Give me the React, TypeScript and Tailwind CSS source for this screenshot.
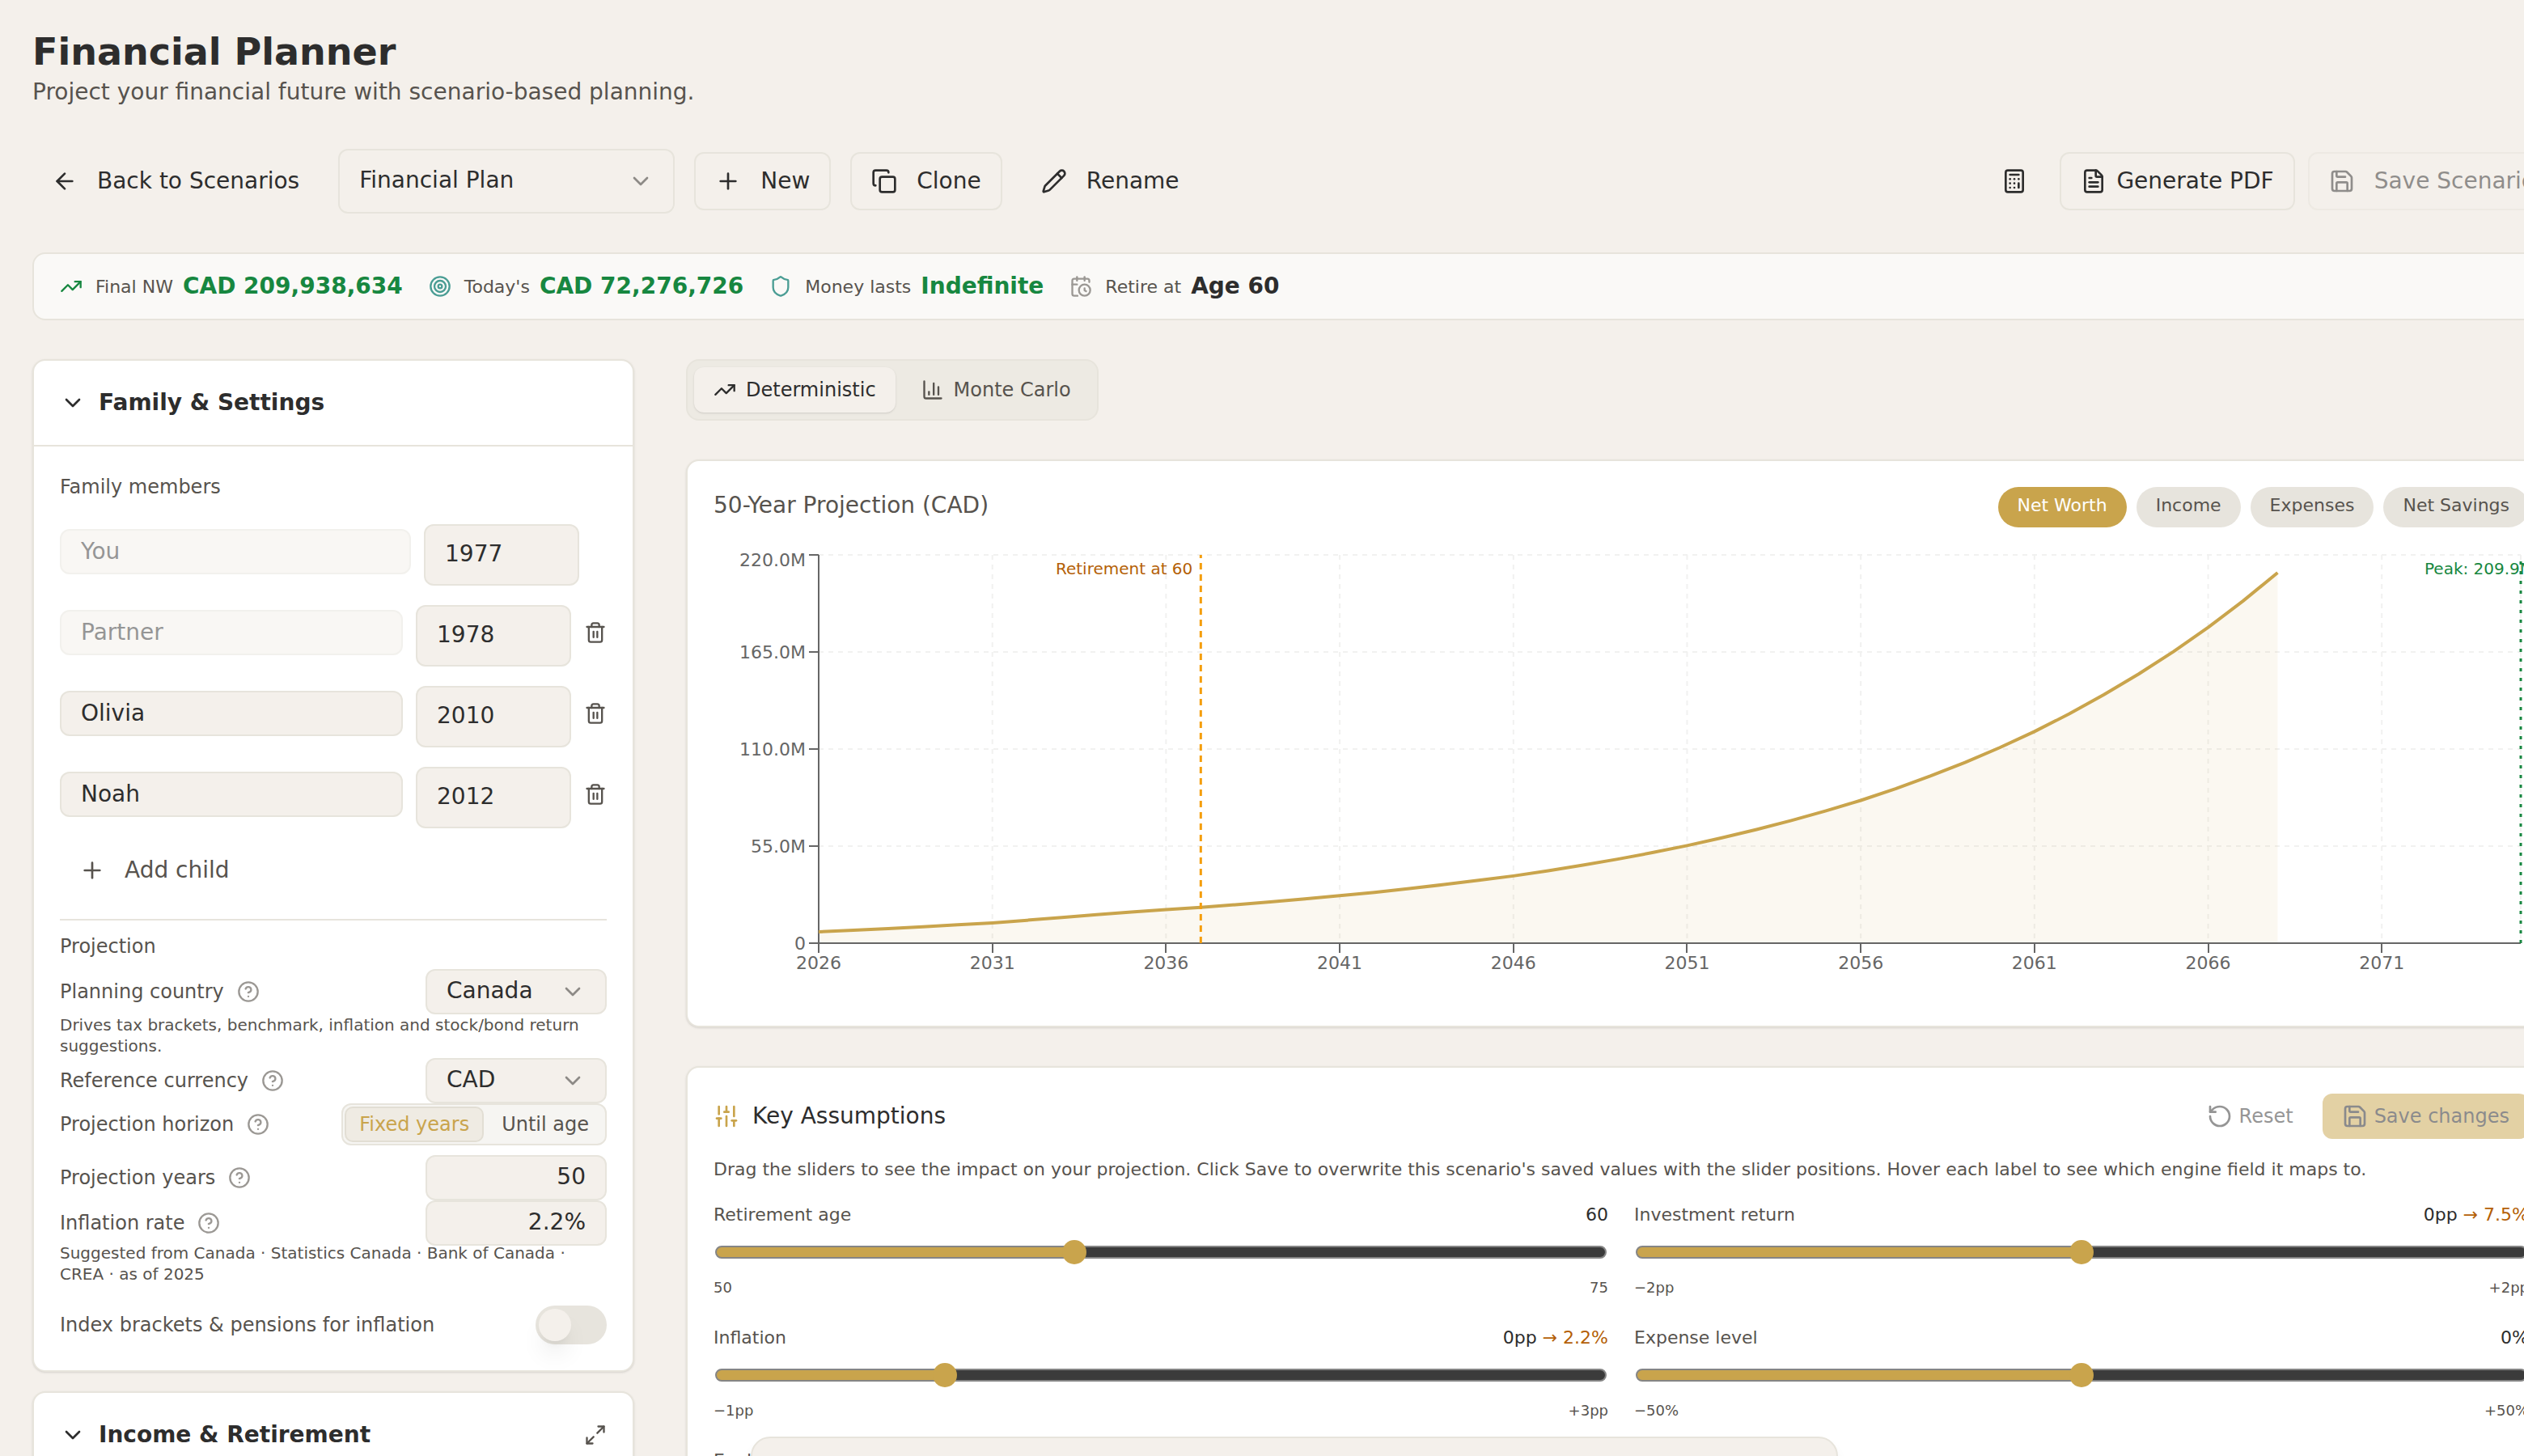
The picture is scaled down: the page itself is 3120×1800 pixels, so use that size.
import React, { useState } from 'react';
import {
  ArrowLeft,
  Calculator,
  CalendarClock,
  ChartColumn,
  ChevronDown,
  CircleHelp,
  Copy,
  FileText,
  Maximize2,
  Pencil,
  Plus,
  RotateCcw,
  Save,
  Shield,
  SlidersVertical,
  Target,
  Trash2,
  TrendingUp,
} from 'lucide-react';

interface Member {
  id: string;
  name: string;
  year: string;
  locked: boolean;
  removable: boolean;
}

const MEMBERS: Member[] = [
  { id: 'you', name: 'You', year: '1977', locked: true, removable: false },
  { id: 'partner', name: 'Partner', year: '1978', locked: true, removable: true },
  { id: 'olivia', name: 'Olivia', year: '2010', locked: false, removable: true },
  { id: 'noah', name: 'Noah', year: '2012', locked: false, removable: true },
];

const START_YEAR = 2026;

// Net worth in millions, one value per year
const NET_WORTH = [
  6.4, 7.3, 8.3, 9.3, 10.4, 11.5, 13.0, 14.6, 16.2, 17.7, 19.0, 20.3, 21.8, 23.4, 25.1, 26.9, 28.8, 30.9, 33.2, 35.6,
  38.1, 41.0, 44.2, 47.6, 51.3, 55.3, 59.7, 64.4, 69.5, 75.0, 80.9, 87.5, 94.7, 102.4, 110.8, 119.9, 129.9, 140.8,
  152.5, 165.2, 178.9, 193.8, 209.9,
];

const SERIES = ['Net Worth', 'Income', 'Expenses', 'Net Savings'];

const PLOT = { left: 130, right: 2234, top: 10, bottom: 490 };
const xOf = (year: number) => PLOT.left + ((year - START_YEAR) * (PLOT.right - PLOT.left)) / 49;
const yOf = (value: number) => PLOT.bottom - (value * (PLOT.bottom - PLOT.top)) / 220;

const ProjectionChart: React.FC = () => {
  const line = NET_WORTH.map((v, i) => `${i === 0 ? 'M' : 'L'}${xOf(START_YEAR + i)} ${yOf(v)}`).join(' ');
  const area = `${line} V${PLOT.bottom} H${PLOT.left} Z`;
  const yTicks = [0, 55, 110, 165, 220];
  const xTicks = [2026, 2031, 2036, 2041, 2046, 2051, 2056, 2061, 2066, 2071];

  return (
    <svg viewBox="0 0 2244 560" className="block w-full overflow-visible" role="img" aria-label="Net worth projection">
      <g stroke="#f1f1f0" strokeWidth="2" strokeDasharray="6 6">
        {yTicks.map((t) => (
          <path key={t} d={`M${PLOT.left} ${yOf(t)} H${PLOT.right}`} />
        ))}
        {[...xTicks, 2075].map((t) => (
          <path key={t} d={`M${xOf(t)} ${PLOT.top} V${PLOT.bottom}`} />
        ))}
      </g>
      <path d={area} fill="#c9a44c" fillOpacity="0.08" />
      <g stroke="#666" strokeWidth="2" shapeRendering="crispEdges">
        <path d={`M${PLOT.left} ${PLOT.top} V${PLOT.bottom}`} />
        <path d={`M${PLOT.left} ${PLOT.bottom} H${PLOT.right}`} />
        {yTicks.map((t) => (
          <path key={t} d={`M${PLOT.left - 12} ${yOf(t)} H${PLOT.left}`} />
        ))}
        {xTicks.map((t) => (
          <path key={t} d={`M${xOf(t)} ${PLOT.bottom} v12`} />
        ))}
      </g>
      <path d={line} fill="none" stroke="#c9a44c" strokeWidth="4" strokeLinejoin="round" />
      <g fill="#666" fontSize="22">
        {yTicks.map((t) => (
          <text key={t} x={PLOT.left - 16} y={t === 220 ? 24 : yOf(t) + 8} textAnchor="end">
            {t === 0 ? '0' : `${t.toFixed(1)}M`}
          </text>
        ))}
        {xTicks.map((t) => (
          <text key={t} x={xOf(t)} y={PLOT.bottom + 32} textAnchor="middle">
            {t}
          </text>
        ))}
      </g>
      <path
        d={`M${xOf(2037)} ${PLOT.bottom} V${PLOT.top}`}
        stroke="#f59e0b"
        strokeWidth="3"
        strokeDasharray="8 6"
      />
      <text x={xOf(2037) - 10} y="34" textAnchor="end" fontSize="20" fill="#b45f06">
        Retirement at 60
      </text>
      <path
        d={`M${xOf(2075)} ${PLOT.bottom} V${PLOT.top}`}
        stroke="#178740"
        strokeWidth="3"
        strokeDasharray="4 8"
      />
      <text x="2115" y="34" fontSize="20" fill="#178740">
        Peak: 209.9M
      </text>
    </svg>
  );
};

interface StatProps {
  icon: React.ReactNode;
  label: string;
  value: string;
  valueClass: string;
}

const Stat: React.FC<StatProps> = ({ icon, label, value, valueClass }) => (
  <div className="flex items-center">
    {icon}
    <span className="ml-4 text-[22px] text-[#57534e]">{label}</span>
    <span className={`ml-3 text-[28px] font-bold ${valueClass}`}>{value}</span>
  </div>
);

const FieldLabel: React.FC<{ htmlFor?: string; children: React.ReactNode }> = ({ htmlFor, children }) => (
  <div className="flex items-center gap-4">
    <label htmlFor={htmlFor} className="text-2xl text-[#57534e]">
      {children}
    </label>
    <CircleHelp size={28} className="text-[#9b9894]" />
  </div>
);

interface DropdownProps {
  id: string;
  options: string[];
  className: string;
  label?: string;
}

const Dropdown: React.FC<DropdownProps> = ({ id, options, className, label }) => (
  <div className={`relative ${className}`}>
    <select
      id={id}
      aria-label={label}
      className="h-full w-full appearance-none rounded-xl border-2 border-[#e7e4dc] bg-[#f4f0eb] px-6 pb-[2px] text-[28px] leading-8 text-[#2d2d2d]"
    >
      {options.map((o) => (
        <option key={o}>{o}</option>
      ))}
    </select>
    <ChevronDown size={32} className="pointer-events-none absolute inset-y-0 right-[26px] my-auto text-[#8d8a86]" />
  </div>
);

interface SliderProps {
  id: string;
  label: string;
  min: number;
  max: number;
  initial: number;
  minLabel: string;
  maxLabel: string;
  value: string;
  result?: string;
}

const AssumptionSlider: React.FC<SliderProps> = ({ id, label, min, max, initial, minLabel, maxLabel, value, result }) => {
  const [current, setCurrent] = useState(initial);
  const fill = ((current - min) / (max - min)) * 100;

  return (
    <div>
      <div className="flex justify-between text-[22px] leading-7">
        <label htmlFor={id} className="text-[#57534e]">
          {label}
        </label>
        <span className="text-[#2d2d2d]">
          {value}
          {result && <span className="text-[#b45f06]"> → {result}</span>}
        </span>
      </div>
      <input
        id={id}
        type="range"
        min={min}
        max={max}
        value={current}
        onChange={(e) => setCurrent(Number(e.target.value))}
        style={{ '--fill': `${fill}%` } as React.CSSProperties}
        className="mt-4 block h-8 w-full appearance-none bg-transparent px-[2px] [&::-webkit-slider-runnable-track]:h-4 [&::-webkit-slider-runnable-track]:rounded-full [&::-webkit-slider-runnable-track]:border-2 [&::-webkit-slider-runnable-track]:border-[#858585] [&::-webkit-slider-runnable-track]:bg-[linear-gradient(to_right,#c9a44c_var(--fill),#3b3b3b_var(--fill))] [&::-webkit-slider-thumb]:-mt-[9px] [&::-webkit-slider-thumb]:size-[30px] [&::-webkit-slider-thumb]:appearance-none [&::-webkit-slider-thumb]:rounded-full [&::-webkit-slider-thumb]:bg-[#c9a44c]"
      />
      <div className="mt-4 flex justify-between pb-1 text-[18px] leading-6 text-[#57534e]">
        <span>{minLabel}</span>
        <span>{maxLabel}</span>
      </div>
    </div>
  );
};

const FamilyCard: React.FC = () => {
  const [horizon, setHorizon] = useState<'fixed' | 'age'>('fixed');
  const [indexed, setIndexed] = useState(false);

  return (
    <section className="rounded-2xl border-2 border-[#e7e4dc] bg-white shadow-sm">
      <div className="flex h-[106px] items-center gap-4 border-b-2 border-[#e7e4dc] px-8 text-[#2d2d2d]">
        <ChevronDown size={32} />
        <h2 className="text-[28px] font-bold">Family &amp; Settings</h2>
      </div>

      <div className="px-8 pt-8 pb-8">
        <p className="text-2xl leading-9 text-[#57534e]">Family members</p>

        <div className="mt-7 flex flex-col gap-6">
          {MEMBERS.map((m) => (
            <div key={m.id} className="flex items-center gap-4">
              <div className="min-w-0 flex-1 pb-2">
                <input
                  type="text"
                  aria-label="Name"
                  defaultValue={m.name}
                  disabled={m.locked}
                  className="block h-14 w-full rounded-xl border-2 border-[#e7e4dc] bg-[#f4f0eb] px-6 pb-[2px] text-[28px] leading-8 text-[#2d2d2d] disabled:opacity-50"
                />
              </div>
              <input
                type="text"
                aria-label={`Birth year of ${m.name}`}
                defaultValue={m.year}
                className="h-[76px] w-48 rounded-xl border-2 border-[#e7e4dc] bg-[#f4f0eb] px-6 pb-1 text-[28px] leading-8 text-[#2d2d2d]"
              />
              {m.removable ? (
                <button aria-label={`Remove ${m.name}`} className="pb-2 text-[#57534e]">
                  <Trash2 size={28} />
                </button>
              ) : (
                <div className="w-[18px]" />
              )}
            </div>
          ))}
        </div>

        <button className="mt-4 flex h-[72px] items-center gap-6 px-6 text-[28px] text-[#57534e]">
          <Plus size={32} />
          Add child
        </button>

        <div className="mt-6 border-t-2 border-[#e7e4dc] pt-4">
          <p className="text-2xl text-[#57534e]">Projection</p>

          <div className="mt-3 flex items-center justify-between">
            <FieldLabel htmlFor="country">Planning country</FieldLabel>
            <Dropdown id="country" options={['Canada', 'United States']} className="h-14 w-56" />
          </div>
          <p className="text-[20px] leading-[26px] text-[#57534e]">
            Drives tax brackets, benchmark, inflation and stock/bond return suggestions.
          </p>
          <div className="mt-[2px] flex items-center justify-between">
            <FieldLabel htmlFor="currency">Reference currency</FieldLabel>
            <Dropdown id="currency" options={['CAD', 'USD', 'EUR']} className="h-14 w-56" />
          </div>
          <div className="flex items-center justify-between">
            <FieldLabel>Projection horizon</FieldLabel>
            <div className="flex gap-1 rounded-xl border-2 border-[#e7e4dc] bg-[#f6f5f2] p-[2px] text-2xl">
              <button
                onClick={() => setHorizon('fixed')}
                className={`h-11 rounded-[10px] border-2 px-4 ${
                  horizon === 'fixed'
                    ? 'border-[#e2ded4] bg-[#efebe3] text-[#c9a44c]'
                    : 'border-transparent text-[#57534e]'
                }`}
              >
                Fixed years
              </button>
              <button
                onClick={() => setHorizon('age')}
                className={`h-11 rounded-[10px] border-2 px-4 ${
                  horizon === 'age'
                    ? 'border-[#e2ded4] bg-[#efebe3] text-[#c9a44c]'
                    : 'border-transparent text-[#57534e]'
                }`}
              >
                Until age
              </button>
            </div>
          </div>
          <div className="mt-3 flex items-center justify-between">
            <FieldLabel htmlFor="years">Projection years</FieldLabel>
            <input
              id="years"
              type="text"
              defaultValue="50"
              className="h-14 w-56 rounded-xl border-2 border-[#e7e4dc] bg-[#f4f0eb] px-6 pb-1 text-right text-[28px] leading-8 text-[#2d2d2d]"
            />
          </div>
          <div className="flex items-center justify-between">
            <FieldLabel htmlFor="inflation-rate">Inflation rate</FieldLabel>
            <input
              id="inflation-rate"
              type="text"
              defaultValue="2.2%"
              className="h-14 w-56 rounded-xl border-2 border-[#e7e4dc] bg-[#f4f0eb] px-6 pb-1 text-right text-[28px] leading-8 text-[#2d2d2d]"
            />
          </div>
          <p className="-mt-1 text-[20px] leading-[26px] text-[#57534e]">
            Suggested from Canada · Statistics Canada · Bank of Canada · CREA · as of 2025
          </p>

          <div className="mt-[26px] flex items-center justify-between">
            <label htmlFor="index" className="text-2xl text-[#57534e]">
              Index brackets &amp; pensions for inflation
            </label>
            <button
              id="index"
              role="switch"
              aria-checked={indexed}
              onClick={() => setIndexed(!indexed)}
              className={`flex h-12 w-[88px] items-center rounded-full p-1 ${
                indexed ? 'justify-end bg-[#c9a44c]' : 'bg-[#e7e4dd]'
              }`}
            >
              <span className="size-10 rounded-full bg-[#f4f0eb] shadow-[0_20px_30px_-6px_rgb(0_0_0/0.1),0_8px_12px_-8px_rgb(0_0_0/0.1)]" />
            </button>
          </div>
        </div>
      </div>
    </section>
  );
};

export default function App() {
  const [series, setSeries] = useState('Net Worth');

  return (
    <div className="h-screen overflow-hidden bg-[#f4f0eb] px-10 pt-8 font-['DejaVu_Sans',sans-serif] text-[#2d2d2d]">
      <div className="w-screen">
        {/* Header */}
        <header>
          <h1 className="text-[46px] leading-[64px] font-bold">Financial Planner</h1>
          <p className="text-[28px] leading-9 text-[#57534e]">Project your financial future with scenario-based planning.</p>
        </header>

        {/* Toolbar */}
        <div className="mt-[52px] flex items-center justify-between text-[28px]">
          <div className="flex items-center gap-6">
            <button className="flex h-[72px] items-center gap-6 px-6">
              <ArrowLeft size={32} />
              Back to Scenarios
            </button>
            <Dropdown id="scenario" label="Scenario" options={['Financial Plan']} className="h-20 w-[416px]" />
            <button className="flex h-[72px] items-center gap-6 rounded-xl border-2 border-[#e7e4dc] px-6">
              <Plus size={32} />
              New
            </button>
            <button className="flex h-[72px] items-center gap-6 rounded-xl border-2 border-[#e7e4dc] px-6">
              <Copy size={32} />
              Clone
            </button>
            <button className="flex h-[72px] items-center gap-6 px-6">
              <Pencil size={32} />
              Rename
            </button>
          </div>
          <div className="flex items-center gap-4">
            <button aria-label="Calculator" className="flex h-[72px] items-center px-6">
              <Calculator size={32} />
            </button>
            <button className="flex h-[72px] items-center gap-3 rounded-xl border-2 border-[#e7e4dc] px-6">
              <FileText size={32} />
              Generate PDF
            </button>
            <button
              disabled
              className="flex h-[72px] items-center gap-6 rounded-xl border-2 border-[#e7e4dc] px-6 disabled:opacity-50"
            >
              <Save size={32} />
              Save Scenario
            </button>
          </div>
        </div>

        {/* Summary */}
        <div className="mt-12 flex h-[84px] items-center gap-8 rounded-2xl border-2 border-[#e7e4dc] bg-[#faf9f7] px-8">
          <Stat
            icon={<TrendingUp size={28} className="text-[#178740]" />}
            label="Final NW"
            value="CAD 209,938,634"
            valueClass="text-[#178740]"
          />
          <Stat
            icon={<Target size={28} className="text-[#4a9d94]" />}
            label="Today's"
            value="CAD 72,276,726"
            valueClass="text-[#178740]"
          />
          <Stat
            icon={<Shield size={28} className="text-[#4a9d94]" />}
            label="Money lasts"
            value="Indefinite"
            valueClass="text-[#178740]"
          />
          <Stat
            icon={<CalendarClock size={28} className="text-[#9b9894]" />}
            label="Retire at"
            value="Age 60"
            valueClass="text-[#2d2d2d]"
          />
        </div>

        <div className="mt-12 flex items-start gap-16">
          <aside className="flex w-[744px] shrink-0 flex-col gap-6">
            <FamilyCard />
            <section className="rounded-2xl border-2 border-[#e7e4dc] bg-white shadow-sm">
              <div className="flex h-[106px] items-center gap-4 border-b-2 border-[#e7e4dc] px-8">
                <ChevronDown size={32} />
                <h2 className="flex-1 text-[28px] font-bold">Income &amp; Retirement</h2>
                <button aria-label="Expand" className="text-[#57534e]">
                  <Maximize2 size={28} />
                </button>
              </div>
            </section>
          </aside>

          <main className="flex min-w-0 flex-1 flex-col gap-12">
            <div className="flex gap-2 self-start rounded-2xl border-2 border-[#e7e4dc] bg-[#edeae3] p-2 text-2xl">
              <button className="flex h-14 items-center gap-3 rounded-xl bg-[#f4f0eb] px-6 shadow-sm">
                <TrendingUp size={28} />
                Deterministic
              </button>
              <button className="flex h-14 items-center gap-3 rounded-xl px-6 text-[#57534e]">
                <ChartColumn size={28} />
                Monte Carlo
              </button>
            </div>

            {/* Projection chart */}
            <section className="rounded-2xl border-2 border-[#e7e4dc] bg-white p-8 shadow-sm">
              <div className="mb-6 flex items-center justify-between">
                <h3 className="pb-1 text-[28px] text-[#57534e]">50-Year Projection (CAD)</h3>
                <div className="flex gap-3">
                  {SERIES.map((s) => (
                    <button
                      key={s}
                      onClick={() => setSeries(s)}
                      className={`h-[50px] rounded-full px-6 pb-[6px] text-[22px] ${
                        s === series ? 'bg-[#c9a44c] text-white' : 'bg-[#e7e4dd] text-[#57534e]'
                      }`}
                    >
                      {s}
                    </button>
                  ))}
                </div>
              </div>
              <ProjectionChart />
            </section>

            {/* Key assumptions */}
            <section className="rounded-2xl border-2 border-[#e7e4dc] bg-white p-8 shadow-sm">
              <div className="flex items-center justify-between">
                <div className="flex items-center gap-4">
                  <SlidersVertical size={32} className="text-[#c9a44c]" />
                  <h3 className="text-[28px]">Key Assumptions</h3>
                </div>
                <div className="flex gap-3 text-2xl">
                  <button disabled className="flex h-14 items-center gap-2 px-6 text-[#2d2d2d] disabled:opacity-50">
                    <RotateCcw size={32} />
                    Reset
                  </button>
                  <button
                    disabled
                    className="flex h-14 items-center gap-2 rounded-xl bg-[#c9a44c] px-6 text-[#18181b] disabled:opacity-50"
                  >
                    <Save size={32} />
                    Save changes
                  </button>
                </div>
              </div>
              <p className="mt-6 text-[22px] leading-7 text-[#57534e]">
                Drag the sliders to see the impact on your projection. Click Save to overwrite this scenario's saved values
                with the slider positions. Hover each label to see which engine field it maps to.
              </p>
              <div className="mt-7 grid grid-cols-2 gap-8">
                <AssumptionSlider
                  id="retirement-age"
                  label="Retirement age"
                  min={50}
                  max={75}
                  initial={60}
                  minLabel="50"
                  maxLabel="75"
                  value="60"
                />
                <AssumptionSlider
                  id="return"
                  label="Investment return"
                  min={-2}
                  max={2}
                  initial={0}
                  minLabel="−2pp"
                  maxLabel="+2pp"
                  value="0pp"
                  result="7.5%"
                />
                <AssumptionSlider
                  id="inflation"
                  label="Inflation"
                  min={-1}
                  max={3}
                  initial={0}
                  minLabel="−1pp"
                  maxLabel="+3pp"
                  value="0pp"
                  result="2.2%"
                />
                <AssumptionSlider
                  id="expenses"
                  label="Expense level"
                  min={-50}
                  max={50}
                  initial={0}
                  minLabel="−50%"
                  maxLabel="+50%"
                  value="0%"
                />
              </div>
              <p className="mt-8 text-[22px] leading-7 text-[#57534e]">Explore</p>
            </section>
          </main>
        </div>

        {/* Floating bar, only its top edge is above the fold */}
        <div className="fixed -bottom-16 left-10 flex w-screen justify-center">
          <div className="h-[88px] w-[1344px] rounded-3xl border-2 border-[#e7e4dc] bg-[#f4f0eb] shadow-lg" />
        </div>
      </div>
    </div>
  );
}
